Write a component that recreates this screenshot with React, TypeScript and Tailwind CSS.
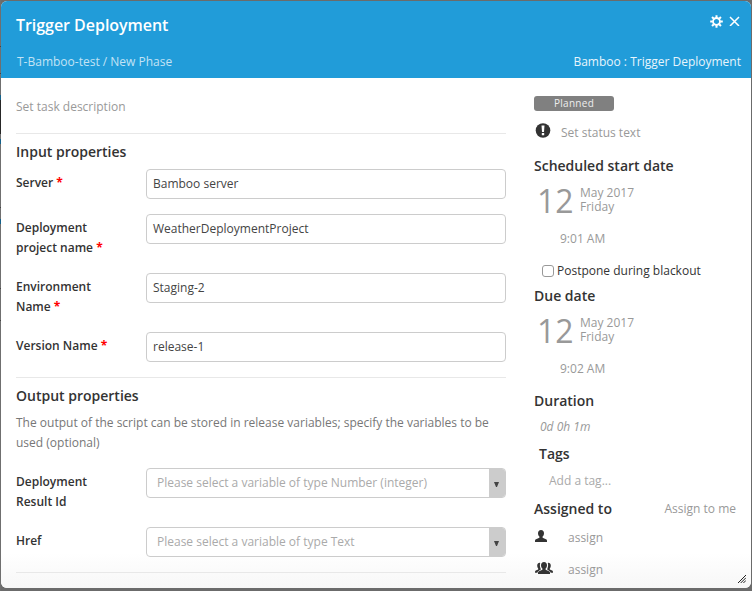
import type { ReactNode } from "react";

function Heading({ children, className = "" }: { children: ReactNode; className?: string }) {
  return <h2 className={`h-5 whitespace-nowrap text-[14px] font-semibold leading-5 text-[#333] ${className}`}>{children}</h2>;
}

function Row({ label, required, children }: { label: string[]; required?: boolean; children: ReactNode }) {
  return (
    <div className="mb-[15px] flex">
      <div className="w-[130px] shrink-0 whitespace-nowrap pt-1 text-[12px] font-semibold leading-5 text-[#333]">
        {label.map((line, i) => (
          <div key={line}>
            {line}
            {required && i === label.length - 1 && <span className="font-bold text-[#f00]"> *</span>}
          </div>
        ))}
      </div>
      {children}
    </div>
  );
}

function Field({ value }: { value: string }) {
  return (
    <div className="h-[30px] w-[360px] rounded-[4px] border border-[#ccc] bg-white pl-[6px] text-[12px] leading-[28px] text-[#444]">
      {value}
    </div>
  );
}

function Select({ text }: { text: string }) {
  return (
    <div className="flex h-[30px] w-[360px] overflow-hidden rounded-[4px] border border-[#ccc] bg-white text-[12px] leading-[28px] text-[#aaa]">
      <span className="flex-1 pl-[10px]">{text}</span>
      <span className="flex w-4 bg-[#ccc] pl-[5px] pt-[13px]">
        <svg width="5" height="5" viewBox="0 0 5 5"><path d="M0 0h5L3 5H2z" fill="#444" /></svg>
      </span>
    </div>
  );
}

function DateBlock({ time }: { time: string }) {
  return (
    <>
      <div className="mt-[9px] flex h-[32px] text-[#999]">
        <span className="ml-[3px] w-[43px] text-[32px] leading-[32px]">12</span>
        <div className="pt-px text-[12px] leading-[14px]">
          <div>May 2017</div>
          <div>Friday</div>
        </div>
      </div>
      <div className="mt-[12px] h-5 pl-[26px] text-[12px] leading-5 text-[#999]">{time}</div>
    </>
  );
}

// Sliver of the page that stays visible left of the dialog.
function PageEdge() {
  return (
    <div className="flex h-full w-px shrink-0 flex-col bg-[#6f6f6f]">
      <i className="mt-[46px] h-px bg-[#444]" />
      <i className="mt-[26px] h-px bg-[#444]" />
      <i className="mt-[21px] h-[5px] bg-[#14618a]" />
      <i className="h-[34px] bg-[#262626]" />
      <i className="mt-[5px] h-[5px] bg-[#14618a]" />
      <i className="mt-[63px] h-px bg-[#444]" />
      <i className="mt-[11px] h-[5px] bg-[#14618a]" />
      <i className="mt-[64px] h-px bg-[#444]" />
      <i className="mt-[31px] h-px bg-[#444]" />
    </div>
  );
}

const person = "M6 0C8 0 9 1.300 9 3.200c0 1.500-.6 2.700-1.400 3.300v1.200l3.400 1.500c.7.300 1 .8 1 1.600V12H0v-1.200c0-.8.3-1.300 1-1.600l3.400-1.500V6.500C3.600 5.900 3 4.700 3 3.200 3 1.300 4 0 6 0z";

export default function App() {
  return (
    <div className="flex h-[591px] w-[752px] overflow-hidden bg-[#6b6b6b] pr-px font-['Open_Sans','Noto_Sans',sans-serif]">
      <PageEdge />
      <div className="relative mt-px flex h-[587px] w-[750px] flex-col overflow-hidden rounded-[6px] bg-white">
        <header className="h-[77px] shrink-0 bg-[#219cd9] pl-[15px] pr-[10px] text-white">
          <div className="flex h-[51px] items-start justify-between">
            <h1 className="pt-[12px] text-[16px] font-semibold leading-6 tracking-[-0.04px]">Trigger Deployment</h1>
            <div className="flex gap-[6px] pt-[14px]">
              <svg width="13" height="13" viewBox="-6.500 -6.500 13 13" fill="none" stroke="#fff">
                <circle r="3.500" strokeWidth="1.800" />
                {[0, 45, 90, 135, 180, 225, 270, 315].map((a) => (
                  <path key={a} d="M0-3.800v-2.500" strokeWidth="2" transform={`rotate(${a})`} />
                ))}
              </svg>
              <svg className="mr-[1px]" width="11" height="11" viewBox="0 0 11 11" stroke="#fff" strokeWidth="1.500"><path d="M1 2l9 9M10 2l-9 9" /></svg>
            </div>
          </div>
          <div className="flex justify-between text-[12px] leading-5">
            <span className="pl-px text-[#c3e3f5]">T-Bamboo-test / New Phase</span>
            <span className="text-[#e8f5fc]">Bamboo : Trigger Deployment</span>
          </div>
        </header>
        <div className="flex flex-1 bg-[linear-gradient(to_bottom,#fff_475px,#f7f7f7_510px)] pl-[15px]">
          <main className="w-[490px] shrink-0">
            <p className="h-[55px] pt-[19px] text-[12px] leading-5 text-[#999]">Set task description</p>
            <section className="border-t border-[#e8e8e8] pt-[8px]">
              <Heading className="mb-[7px]">Input properties</Heading>
              <Row label={["Server"]} required><Field value="Bamboo server" /></Row>
              <Row label={["Deployment", "project name"]} required><Field value="WeatherDeploymentProject" /></Row>
              <Row label={["Environment", "Name"]} required><Field value="Staging-2" /></Row>
              <Row label={["Version Name"]} required><Field value="release-1" /></Row>
            </section>
            <section className="border-y border-[#e8e8e8] pt-[8px]">
              <Heading className="mb-[7px]">Output properties</Heading>
              <p className="mb-[15px] whitespace-nowrap text-[12px] leading-5 text-[#777]">
                The output of the script can be stored in release variables; specify the variables to be<br />used (optional)
              </p>
              <Row label={["Deployment", "Result Id"]}><Select text="Please select a variable of type Number (integer)" /></Row>
              <Row label={["Href"]}><Select text="Please select a variable of type Text" /></Row>
            </section>
          </main>
          <aside className="ml-[28px] w-[202px] pt-[18px] text-[12px]">
            <div className="h-[15px] w-20 rounded-[3px] bg-[#808080] text-center text-[10px] leading-[15px] tracking-[0.300px] text-[#eee]">Planned</div>
            <div className="mt-[12px] flex h-5 text-[#999]">
              <svg className="ml-[1px]" width="16" height="15" viewBox="0 0 15 15"><circle cx="7.500" cy="7.500" r="7.300" fill="#333" /><path d="M6 2.500h3L8.500 9h-2zM6.300 10h2.400v2.300H6.300z" fill="#fff" /></svg>
              <span className="ml-[10px] leading-5">Set status text</span>
            </div>
            <Heading className="mt-[13px]">Scheduled start date</Heading>
            <DateBlock time="9:01 AM" />
            <div className="mt-[12px] flex h-5 items-center text-[#333]">
              <span className="ml-2 size-3 rounded-[3px] border border-[#999] bg-white" />
              <span className="ml-[3px]">Postpone during blackout</span>
            </div>
            <Heading className="mt-[5px]">Due date</Heading>
            <DateBlock time="9:02 AM" />
            <Heading className="mt-[12px]">Duration</Heading>
            <div className="mt-[6px] pl-[6px] italic leading-5 text-[#999]">0d 0h 1m</div>
            <Heading className="mt-[7px] pl-[5px]">Tags</Heading>
            <div className="mt-[7px] pl-[15px] leading-5 text-[#aaa]">Add a tag...</div>
            <div className="mt-[8px] flex justify-between">
              <Heading>Assigned to</Heading>
              <span className="leading-5 text-[#999]">Assign to me</span>
            </div>
            <div className="mt-[9px] flex h-5 text-[#999]">
              <svg className="ml-px mt-[2px]" width="12" height="12" viewBox="0 0 12 12" fill="#333"><path d={person} /></svg>
              <span className="ml-[21px] leading-5">assign</span>
            </div>
            <div className="mt-[12px] flex h-5 text-[#999]">
              <svg className="ml-px mt-[2px]" width="18" height="12" viewBox="0 0 18 12" fill="#333">
                <path d="M5.200.9C3.200.6 2 2 2.200 4c.1 1.100.5 1.900 1 2.400v1L.8 8.500c-.5.300-.8.700-.8 1.500v.7h2.600c.1-.8.400-1.300 1-1.600l2-1V6.500C4.900 5 4.600 2.800 5.200.9zM12.800.9c2-.3 3.200 1.100 3 3.100-.1 1.100-.5 1.900-1 2.400v1l2.400 1.100c.5.300.8.700.8 1.500v.7h-2.600c-.1-.8-.4-1.300-1-1.600l-2-1V6.500c.7-1.500 1-3.700.4-5.600z" />
                <path d={person} transform="translate(3 0)" stroke="#fff" strokeWidth=".6" paintOrder="stroke" />
              </svg>
              <span className="ml-[15px] leading-5">assign</span>
            </div>
          </aside>
        </div>
        <svg className="absolute bottom-[5px] right-[5px]" width="8" height="8" viewBox="0 0 8 8" stroke="#222" strokeWidth="1"><path d="M0 8l8-8M2.700 8L8 2.700M5.400 8L8 5.400" /></svg>
      </div>
    </div>
  );
}
